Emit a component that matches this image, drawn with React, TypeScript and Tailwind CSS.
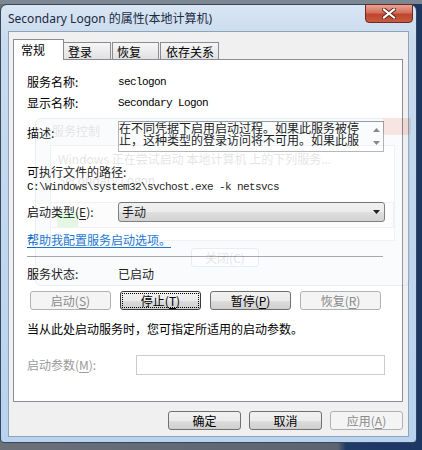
import type { ReactNode } from 'react'

function Key({ children }: { children: ReactNode }) {
  return <span className="underline underline-offset-2">{children}</span>
}

function Btn({
  children,
  width = 'w-[81px]',
  disabled = false,
  focused = false,
}: {
  children: ReactNode
  width?: string
  disabled?: boolean
  focused?: boolean
}) {
  if (disabled) {
    return (
      <div className={`${width} h-[19px] rounded-[3px] border border-[#adb2b5] bg-[#f4f4f4] text-[#8a8a8a] flex items-center justify-center leading-[16px]`}>
        {children}
      </div>
    )
  }
  return (
    <div
      className={`${width} h-[19px] rounded-[3px] border ${focused ? 'border-[#3a3a3a]' : 'border-[#707070]'} bg-[linear-gradient(#f2f2f2_0%,#ebebeb_50%,#dddddd_51%,#cfcfcf_100%)] p-[2px] text-black`}
    >
      <div className={`h-full flex items-center justify-center leading-[16px] ${focused ? 'outline outline-1 outline-dotted outline-black' : ''}`}>
        {children}
      </div>
    </div>
  )
}

function Label({ children, w = 'w-[91px]' }: { children: ReactNode; w?: string }) {
  return <div className={`${w} shrink-0 leading-[16px]`}>{children}</div>
}

export default function App() {
  return (
    <div className="relative w-[422px] h-[450px] overflow-hidden bg-[linear-gradient(90deg,#6b7079_0%,#5d6470_80%,#1f3a66_82%,#1c3763_100%)] text-[12px] text-black font-['Noto_Sans_CJK_SC','Noto_Sans',sans-serif]">
      <div className="h-[4px] bg-[#7d8792]" />

      {/* window */}
      <div className="w-[417px] h-[439px] rounded-t-[7px] rounded-b-[4px] border border-[#34495f] bg-[linear-gradient(#d9e5f2_0%,#c9dbee_8%,#b9d3ee_100%)] flex flex-col">
        {/* title bar */}
        <div className="h-[26px] flex items-start">
          <div className="pl-[7px] pt-[5px] leading-[18px] text-[12px] text-[#1a2a44] font-['Noto_Sans','Noto_Sans_CJK_SC',sans-serif]">
            Secondary Logon 的属性(本地计算机)
          </div>
          <div className="ml-auto mr-[3px] -mt-[1px] w-[48px] h-[19px] rounded-b-[4px] border border-[#6b2a26] bg-[linear-gradient(#e8a493_0%,#d3705c_45%,#c0442d_55%,#c75a3f_100%)] flex items-center justify-center">
            <svg width="14" height="11" viewBox="0 0 14 11">
              <path d="M2 1.5 L12 9.5 M12 1.5 L2 9.5" stroke="#5a2018" strokeWidth="4" strokeLinecap="square" />
              <path d="M2 1.5 L12 9.5 M12 1.5 L2 9.5" stroke="#ffffff" strokeWidth="2.2" strokeLinecap="square" />
            </svg>
          </div>
        </div>

        {/* client */}
        <div className="mx-[7px] h-[406px] border border-[#8fa3ba] bg-[#f0f0f0] pt-[7px]">
          {/* tabs */}
          <div className="ml-[4px] h-[20px] flex items-end">
            <div className="relative z-10 -mb-[1px] w-[51px] h-[21px] border border-b-0 border-[#898c95] bg-white pl-[7px] leading-[20px]">
              常规
            </div>
            <div className="w-[47px] h-[17px] border border-b-0 border-l-0 border-[#898c95] bg-[linear-gradient(#f6f6f6,#e1e1e1)] pl-[4px] leading-[17px]">
              登录
            </div>
            <div className="ml-[1px] w-[47px] h-[17px] border border-b-0 border-[#898c95] bg-[linear-gradient(#f6f6f6,#e1e1e1)] pl-[4px] leading-[17px]">
              恢复
            </div>
            <div className="ml-[1px] w-[59px] h-[17px] border border-b-0 border-[#898c95] bg-[linear-gradient(#f6f6f6,#e1e1e1)] pl-[5px] leading-[17px]">
              依存关系
            </div>
          </div>

          {/* panel */}
          <div className="ml-[4px] mr-[5px] h-[343px] border border-[#898c95] bg-white pl-[13px] pt-[14px]">
            <div className="flex h-[16px]">
              <Label>服务名称:</Label>
              <div className="leading-[16px] font-['Liberation_Mono',monospace] text-[11px] tracking-[-0.6px]">seclogon</div>
            </div>
            <div className="flex h-[16px] mt-[5px]">
              <Label>显示名称:</Label>
              <div className="leading-[16px] font-['Liberation_Mono',monospace] text-[11px] tracking-[-0.6px]">Secondary Logon</div>
            </div>

            <div className="flex mt-[10px]">
              <div className="w-[91px] shrink-0 pt-[4px] leading-[16px]">描述:</div>
              <div className="w-[266px] h-[31px] border border-[#abadb3] border-t-[#8c8f96] flex">
                <div className="flex-1 leading-[12px] whitespace-nowrap">
                  <div>在不同凭据下启用启动过程。如果此服务被停</div>
                  <div>止，这种类型的登录访问将不可用。如果此服</div>
                </div>
                <div className="w-[13px] flex flex-col items-center justify-between py-[6px]">
                  <svg width="7" height="4" viewBox="0 0 7 4"><path d="M3.5 0 L7 4 L0 4 Z" fill="#7a7a7a" /></svg>
                  <svg width="7" height="4" viewBox="0 0 7 4"><path d="M0 0 L7 0 L3.5 4 Z" fill="#7a7a7a" /></svg>
                </div>
              </div>
            </div>

            <div className="mt-[12px] leading-[16px]">可执行文件的路径:</div>
            <div className="h-[14px] leading-[14px] font-['Liberation_Mono',monospace] text-[11px] tracking-[-0.6px]">
              {'C:\\Windows\\system32\\svchost.exe -k netsvcs'}
            </div>

            <div className="flex items-center mt-[8px]">
              <Label>
                启动类型(<Key>E</Key>):
              </Label>
              <div className="w-[267px] h-[20px] rounded-[3px] border border-[#707070] bg-[linear-gradient(#f2f2f2_0%,#ebebeb_50%,#dddddd_51%,#cfcfcf_100%)] flex items-center pl-[3px] pr-[4px]">
                <span className="leading-[16px]">手动</span>
                <svg className="ml-auto" width="7" height="4" viewBox="0 0 7 4"><path d="M0 0 L7 0 L3.5 4 Z" fill="#000" /></svg>
              </div>
            </div>

            <div className="mt-[10px] leading-[16px]">
              <span className="text-[#0066cc] underline underline-offset-2">帮助我配置服务启动选项。</span>
            </div>

            <div className="mt-[8px] w-[356px] h-px bg-[#a0a0a0]" />

            <div className="flex mt-[9px] h-[16px]">
              <Label>服务状态:</Label>
              <div className="leading-[16px]">已启动</div>
            </div>

            <div className="flex gap-[9px] ml-[3px] mt-[9px]">
              <Btn disabled>
                启动(<Key>S</Key>)
              </Btn>
              <Btn focused>
                停止(<Key>T</Key>)
              </Btn>
              <Btn>
                暂停(<Key>P</Key>)
              </Btn>
              <Btn disabled>
                恢复(<Key>R</Key>)
              </Btn>
            </div>

            <div className="mt-[11px] leading-[16px]">当从此处启动服务时，您可指定所适用的启动参数。</div>

            <div className="flex items-center mt-[18px]">
              <div className="w-[109px] shrink-0 leading-[16px] text-[#9a9a9a]">
                启动参数(<Key>M</Key>):
              </div>
              <div className="w-[249px] h-[20px] border border-[#c9cbcf] bg-white" />
            </div>
          </div>

          {/* dialog buttons */}
          <div className="mt-[9px] mr-[5px] flex justify-end gap-[8px]">
            <Btn width="w-[73px]">确定</Btn>
            <Btn width="w-[73px]">取消</Btn>
            <Btn width="w-[73px]" disabled>
              应用(<Key>A</Key>)
            </Btn>
          </div>
        </div>
      </div>

      {/* faint ghost of the service-control dialog showing through */}
      <div className="pointer-events-none absolute inset-0 opacity-[0.13]">
        <div className="absolute left-[35px] top-[118px] w-[375px] h-[168px] rounded-[6px] border border-[#5d7fa8] bg-[#dce8f5]" />
        <div className="absolute left-[383px] top-[118px] w-[28px] h-[17px] rounded-b-[3px] bg-[#c43c2a]" />
        <div className="absolute left-[52px] top-[123px] leading-[16px] text-[#333]">服务控制</div>
        <div className="absolute left-[50px] top-[145px] w-[345px] h-[96px] border border-[#8da2bb] bg-white" />
        <div className="absolute left-[58px] top-[151px] leading-[16px] text-[#333] whitespace-nowrap">
          Windows 正在尝试启动 本地计算机 上的下列服务...
        </div>
        <div className="absolute left-[58px] top-[172px] leading-[16px] text-[#333]">Secondary Logon</div>
        <div className="absolute left-[50px] top-[202px] w-[344px] h-[26px] border border-[#8da2bb] bg-[#eeeeee]" />
        <div className="absolute left-[57px] top-[212px] w-[21px] h-[15px] bg-[#2ec82e]" />
        <div className="absolute left-[191px] top-[248px] w-[68px] h-[19px] rounded-[3px] border border-[#3c7fb1] bg-[#e5f1fb] text-center leading-[17px] text-[#333]">
          关闭(C)
        </div>
      </div>
    </div>
  )
}
